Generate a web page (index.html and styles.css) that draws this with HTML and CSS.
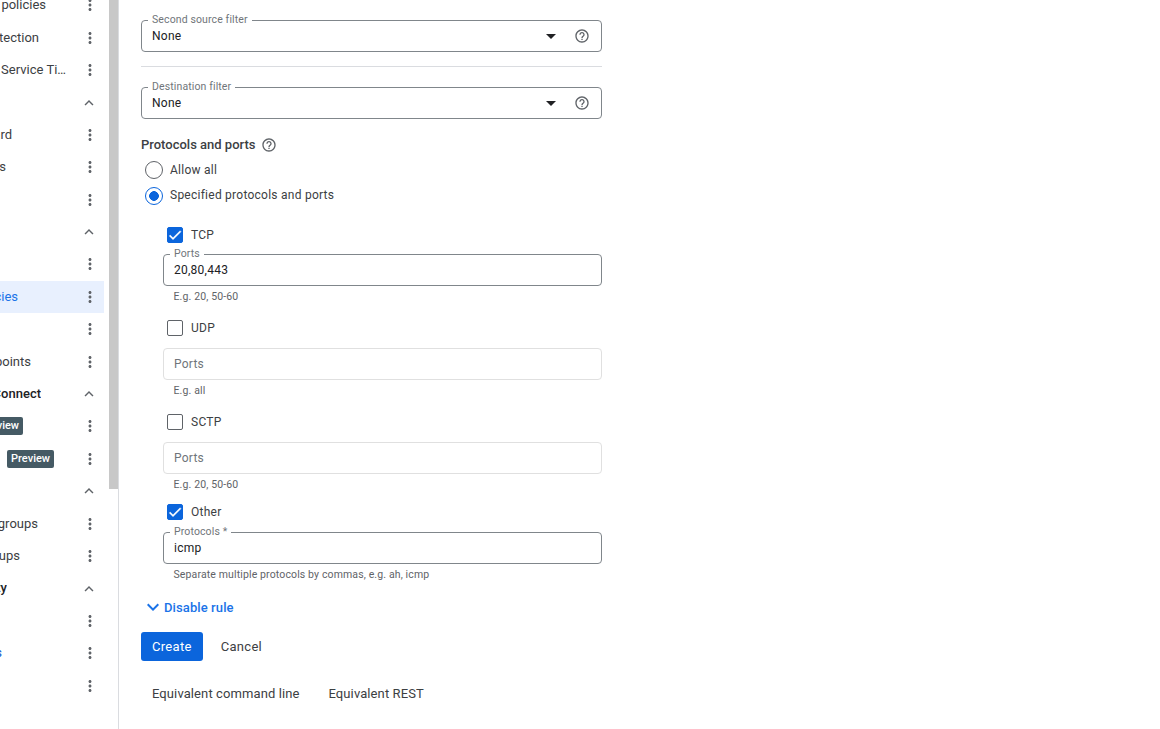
FILE: index.html
```html
<!DOCTYPE html>
<html lang="en">
<head>
<meta charset="utf-8">
<title>Create firewall rule</title>
<link rel="stylesheet" href="styles.css">
</head>
<body>
<svg class="defs" aria-hidden="true"><defs>
<symbol id="dots" viewBox="0 0 24 24"><path d="M12 8c1.1 0 2-.9 2-2s-.9-2-2-2-2 .9-2 2 .9 2 2 2zm0 2c-1.1 0-2 .9-2 2s.9 2 2 2 2-.9 2-2-.9-2-2-2zm0 6c-1.1 0-2 .9-2 2s.9 2 2 2 2-.9 2-2-.9-2-2-2z"/></symbol>
<symbol id="up" viewBox="0 0 24 24"><path d="M12 8l-6 6 1.41 1.41L12 10.83l4.59 4.58L18 14z"/></symbol>
<symbol id="down" viewBox="0 0 24 24"><path d="M16.59 8.59L12 13.17 7.41 8.59 6 10l6 6 6-6z"/></symbol>
<symbol id="help" viewBox="0 0 24 24"><path d="M11 18h2v-2h-2v2zm1-16C6.48 2 2 6.48 2 12s4.48 10 10 10 10-4.48 10-10S17.52 2 12 2zm0 18c-4.41 0-8-3.59-8-8s3.59-8 8-8 8 3.59 8 8-3.59 8-8 8zm0-14c-2.21 0-4 1.79-4 4h2c0-1.1.9-2 2-2s2 .9 2 2c0 2-3 1.75-3 5h2c0-2.25 3-2.5 3-5 0-2.21-1.79-4-4-4z"/></symbol>
<symbol id="check" viewBox="0 0 24 24"><path d="M9 16.2L4.8 12l-1.4 1.4L9 19 21 7l-1.4-1.4z"/></symbol>
</defs></svg>
<div class="app">
  <aside class="side">
    <nav class="nav">
      <div class="row"><span class="label e46"><span>Firewall policies</span></span><svg class="more"><use href="#dots"/></svg></div>
      <div class="row"><span class="label e39"><span>Data protection</span></span><svg class="more"><use href="#dots"/></svg></div>
      <div class="row"><span class="label e66"><span>Network Service Ti…</span></span><svg class="more"><use href="#dots"/></svg></div>
      <div class="row"><span class="label"></span><svg class="chev"><use href="#up"/></svg></div>
      <div class="row"><span class="label e11"><span>Dashboard</span></span><svg class="more"><use href="#dots"/></svg></div>
      <div class="row"><span class="label e6"><span>Zones</span></span><svg class="more"><use href="#dots"/></svg></div>
      <div class="row"><span class="label"></span><svg class="more"><use href="#dots"/></svg></div>
      <div class="row"><span class="label"></span><svg class="chev"><use href="#up"/></svg></div>
      <div class="row"><span class="label"></span><svg class="more"><use href="#dots"/></svg></div>
      <div class="row active"><span class="label e18"><span>Firewall policies</span></span><svg class="more"><use href="#dots"/></svg></div>
      <div class="row"><span class="label"></span><svg class="more"><use href="#dots"/></svg></div>
      <div class="row"><span class="label e31"><span>Endpoints</span></span><svg class="more"><use href="#dots"/></svg></div>
      <div class="row head"><span class="label e41"><span>Private Service Connect</span></span><svg class="chev"><use href="#up"/></svg></div>
      <div class="row"><span class="label e23"><span class="badge">Preview</span></span><svg class="more"><use href="#dots"/></svg></div>
      <div class="row"><span class="label e54"><span class="badge">Preview</span></span><svg class="more"><use href="#dots"/></svg></div>
      <div class="row"><span class="label"></span><svg class="chev"><use href="#up"/></svg></div>
      <div class="row"><span class="label e38"><span>Instance groups</span></span><svg class="more"><use href="#dots"/></svg></div>
      <div class="row"><span class="label e20"><span>Endpoint groups</span></span><svg class="more"><use href="#dots"/></svg></div>
      <div class="row head"><span class="label e7"><span>Security</span></span><svg class="chev"><use href="#up"/></svg></div>
      <div class="row"><span class="label"></span><svg class="more"><use href="#dots"/></svg></div>
      <div class="row link"><span class="label e2"><span>Logs</span></span><svg class="more"><use href="#dots"/></svg></div>
      <div class="row"><span class="label"></span><svg class="more"><use href="#dots"/></svg></div>
    </nav>
    <div class="scroll"><div class="thumb"></div></div>
  </aside>
  <main class="main">
    <form class="form">
      <div class="field select first">
        <span class="legend">Second source filter</span>
        <span class="value">None</span>
        <span class="caret"></span>
        <svg class="help"><use href="#help"/></svg>
      </div>
      <hr class="rule">
      <div class="field select">
        <span class="legend">Destination filter</span>
        <span class="value">None</span>
        <span class="caret"></span>
        <svg class="help"><use href="#help"/></svg>
      </div>
      <h2 class="title">Protocols and ports <svg class="help small"><use href="#help"/></svg></h2>
      <div class="radio r1"><span class="dot"></span>Allow all</div>
      <div class="radio r2"><span class="dot on"></span>Specified protocols and ports</div>
      <div class="protos">
        <div class="check c-tcp"><span class="box on"><svg><use href="#check"/></svg></span>TCP</div>
        <div class="field"><span class="legend">Ports</span><span class="value">20,80,443</span></div>
        <p class="hint">E.g. 20, 50-60</p>
        <div class="check"><span class="box"></span>UDP</div>
        <div class="field off"><span class="value">Ports</span></div>
        <p class="hint">E.g. all</p>
        <div class="check"><span class="box"></span>SCTP</div>
        <div class="field off"><span class="value">Ports</span></div>
        <p class="hint">E.g. 20, 50-60</p>
        <div class="check c-other"><span class="box on"><svg><use href="#check"/></svg></span>Other</div>
        <div class="field"><span class="legend">Protocols *</span><span class="value">icmp</span></div>
        <p class="hint">Separate multiple protocols by commas, e.g. ah, icmp</p>
      </div>
      <div class="toggle"><svg><use href="#down"/></svg>Disable rule</div>
      <div class="actions"><span class="btn primary">Create</span><span class="btn">Cancel</span></div>
      <div class="equiv"><span>Equivalent command line</span><span>Equivalent REST</span></div>
    </form>
  </main>
</div>
</body>
</html>
```
FILE: styles.css
```css
* { box-sizing: border-box; }
html, body { margin: 0; height: 100%; overflow: hidden; background: #fff; }
body { font-family: Roboto, "Liberation Sans", sans-serif; font-size: 12px; color: #202124; }
.defs { display: none; }
.app { display: flex; height: 729px; overflow: hidden; }

.side { width: 119px; flex: none; display: flex; border-right: 1px solid #dadce0; height: 729px; overflow: hidden; }
.nav { width: 109px; flex: none; margin-top: -10.9px; }
.row { height: 32.4px; width: 104px; display: flex; align-items: center; position: relative; color: #3c4043; font-size: 13px; }
.label { width: 80px; flex: none; display: flex; justify-content: flex-end; overflow: hidden; white-space: nowrap; line-height: 20px; }
.label > span { flex: none; }
.e46 { width: 46px; margin-right: 34px; }
.e39 { width: 39px; margin-right: 41px; }
.e66 { width: 66px; margin-right: 14px; }
.e11 { width: 12px; margin-right: 68px; }
.e6 { width: 6px; margin-right: 74px; }
.e18 { width: 18px; margin-right: 62px; }
.e31 { width: 31px; margin-right: 49px; }
.e41 { width: 41px; margin-right: 39px; }
.e23 { width: 23px; margin-right: 57px; }
.e54 { width: 54px; margin-right: 26px; }
.e38 { width: 38px; margin-right: 42px; }
.e20 { width: 20px; margin-right: 60px; }
.e7 { width: 7px; margin-right: 73px; }
.e2 { width: 2px; margin-right: 78px; }
.more { width: 18px; height: 18px; fill: #5f6368; margin-left: 1px; flex: none; }
.chev { width: 18px; height: 18px; fill: #5f6368; flex: none; margin-top: .6px; }
.active { background: #e8f0fe; }
.active .label { color: #1a73e8; }
.head .label { font-weight: 500; color: #202124; }
.link .label { color: #0b57d0; }
.badge { background: #455a64; color: #fff; font-size: 11px; font-weight: 500; line-height: 17px; height: 18px; padding: 0 4px; border-radius: 2px; }
.scroll { width: 9px; flex: none; }
.thumb { height: 489px; background: #c8c8c8; }

.main { flex: 1; padding-left: 22px; }
.form { width: 461px; }
.field { height: 32px; border: 1px solid #80868b; border-radius: 4px; position: relative; display: flex; align-items: center; padding-left: 10px; font-size: 12px; letter-spacing: .25px; }
.first { margin-top: 20px; }
.legend { position: absolute; left: 6px; top: -7px; padding: 0 4px; background: #fff; font-size: 10.5px; line-height: 12px; color: #70757a; letter-spacing: .12px; }
.value { flex: 1; color: #202124; }
.caret { width: 0; height: 0; border-left: 5px solid transparent; border-right: 5px solid transparent; border-top: 5px solid #202124; margin-right: 18px; }
.help { width: 16px; height: 16px; fill: #5f6368; margin-right: 11px; flex: none; }
.help.small { margin: 0 0 0 2px; vertical-align: -4px; }
.rule { border: 0; border-top: 1px solid #dadce0; margin: 14px 0 20px; }
.title { margin: 17px 0 0; font-size: 13px; line-height: 18px; font-weight: 500; color: #3c4043; }
.radio { display: flex; align-items: center; height: 26px; padding-left: 4px; font-size: 12px; color: #3c4043; letter-spacing: .25px; }
.r1 { margin-top: 3px; }
.r2 { height: 25px; margin-top: -1px; }
.dot { width: 18px; height: 18px; border-radius: 50%; border: 1.5px solid #5f6368; margin-right: 7px; flex: none; background: #fff; }
.dot.on { border-color: #0b65dc; background: radial-gradient(circle, #0b65dc 0 4.6px, #fff 5px); margin-top: 2px; }
.protos { padding-left: 22px; margin-top: 18px; }
.check { display: flex; align-items: center; height: 20px; padding-left: 4px; gap: 8px; color: #3c4043; letter-spacing: .25px; }
.box { width: 16px; height: 16px; border: 1.2px solid #5f6368; border-radius: 2px; display: flex; flex: none; }
.box.on { background: #0b65dc; border-color: #0b65dc; }
.box svg { width: 16px; height: 16px; margin: -1.2px; flex: none; fill: #fff; stroke: #fff; stroke-width: .6px; }
.protos .field { margin-top: 10px; }
.protos .c-tcp + .field { margin-top: 9px; }
.off { border-color: #e0e0e0; }
.off .value { color: #70757a; }
.hint { margin: 4px 0 0; padding-left: 10.5px; font-size: 10.5px; line-height: 13px; color: #5f6368; height: 28px; letter-spacing: .13px; }
.c-other { margin-top: -4px; }
.toggle { display: flex; align-items: center; height: 20px; margin-top: 1px; color: #1a73e8; font-size: 13px; font-weight: 500; letter-spacing: .1px; }
.toggle svg { width: 24px; height: 24px; margin-right: -1px; fill: #1a73e8; flex: none; }
.actions { display: flex; align-items: center; margin-top: 15px; }
.btn { height: 29px; display: flex; align-items: center; padding: 0 11px; font-size: 13px; color: #3c4043; border-radius: 3px; letter-spacing: .3px; }
.btn + .btn { margin-left: 7px; }
.primary { background: #0b65dc; color: #fff; }
.equiv { display: flex; margin-top: 23px; padding-left: 11px; gap: 29px; font-size: 13px; color: #3c4043; line-height: 20px; letter-spacing: .1px; }
```
